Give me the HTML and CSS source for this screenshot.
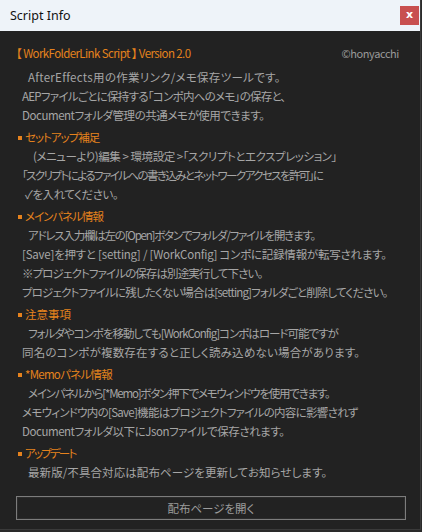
FILE: index.html
```html
<!DOCTYPE html>
<html lang="ja">
<head>
<meta charset="utf-8">
<link rel="stylesheet" href="styles.css">
</head>
<body>
<div class="window">
  <div class="titlebar">
    <span class="title">Script Info</span>
    <span class="close">x</span>
  </div>
  <div class="content">
    <div class="header">
      <span class="ver">【 WorkFolderLink Script 】 Version 2.0</span>
      <span class="copy">©honyacchi</span>
    </div>
    <div class="para">
      <div class="line first sp3">AfterEffects用の作業リンク/メモ保存ツールです。</div>
      <div class="line sm7">AEPファイルごとに保持する「コンポ内へのメモ」の保存と、</div>
      <div class="line">Documentフォルダ管理の共通メモが使用できます。</div>
    </div>

    <div class="heading sm10"><span class="bullet"></span>セットアップ補足</div>
    <div class="para">
      <div class="line first wide">(メニューより)編集 &gt; 環境設定 &gt;「スクリプトとエクスプレッション」</div>
      <div class="line sm16">「スクリプトによるファイルへの書き込みとネットワークアクセスを許可」に</div>
      <div class="line check">✓を入れてください。</div>
    </div>

    <div class="heading sm10"><span class="bullet"></span>メインパネル情報</div>
    <div class="para">
      <div class="line first sm12">アドレス入力欄は左の[Open]ボタンでフォルダ/ファイルを開きます。</div>
      <div class="line sm2">[Save]を押すと [setting] / [WorkConfig] コンポに記録情報が転写されます。</div>
      <div class="line sm9">※プロジェクトファイルの保存は別途実行して下さい。</div>
      <div class="line sm8">プロジェクトファイルに残したくない場合は[setting]フォルダごと削除してください。</div>
    </div>

    <div class="heading sp0"><span class="bullet"></span>注意事項</div>
    <div class="para">
      <div class="line first sm10">フォルダやコンポを移動しても[WorkConfig]コンポはロード可能ですが</div>
      <div class="line sp2">同名のコンポが複数存在すると正しく読み込めない場合があります。</div>
    </div>

    <div class="heading sm7"><span class="bullet"></span>*Memoパネル情報</div>
    <div class="para">
      <div class="line first sm12">メインパネルから[*Memo]ボタン押下でメモウィンドウを使用できます。</div>
      <div class="line sm7">メモウィンドウ内の[Save]機能はプロジェクトファイルの内容に影響されず</div>
      <div class="line">Documentフォルダ以下にJsonファイルで保存されます。</div>
    </div>

    <div class="heading sm18"><span class="bullet"></span>アップデート</div>
    <div class="para">
      <div class="line first sp1">最新版/不具合対応は配布ページを更新してお知らせします。</div>
    </div>

    <div class="btnrow">
      <div class="button">配布ページを開く</div>
    </div>
  </div>
</div>
</body>
</html>
```

FILE: styles.css
```css
html, body {
  margin: 0;
  padding: 0;
  background: #2a2a2a;
}
body {
  width: 422px;
  height: 532px;
  overflow: hidden;
  font-family: "Noto Sans CJK JP", "Noto Sans", sans-serif;
}
.window {
  width: 420px;
  height: 529px;
  display: flex;
  flex-direction: column;
  background: #222222;
  border-right: 1px solid #3a3a3a;
  border-bottom: 1px solid #3a3a3a;
}
.titlebar {
  height: 31px;
  background: #eef3f9;
  display: flex;
  align-items: center;
  justify-content: space-between;
  padding: 0 1px 0 10px;
  flex-shrink: 0;
}
.title {
  font-family: "Noto Sans", sans-serif;
  font-size: 12.5px;
  color: #111;
}
.close {
  width: 19px;
  height: 19px;
  background: #c84f4f;
  color: #fff;
  font-family: "DejaVu Sans", sans-serif;
  font-weight: bold;
  font-size: 11px;
  display: flex;
  align-items: center;
  justify-content: center;
  line-height: 1;
  padding-bottom: 2px;
  box-sizing: border-box;
}
.content {
  flex: 1;
  padding: 13px 20px 0 16px;
  font-size: 11.5px;
  color: #a6a6a6;
  font-feature-settings: "palt";
  letter-spacing: -0.45px;
}
.header {
  display: flex;
  justify-content: space-between;
  line-height: 19px;
  margin-bottom: 5px;
}
.ver {
  color: #e5821d;
  letter-spacing: -0.6px;
}
.copy {
  color: #9a9a9a;
  font-size: 11px;
  letter-spacing: -0.4px;
  padding-right: 1px;
}
.line {
  line-height: 19px;
  height: 19px;
  padding-left: 6px;
  white-space: nowrap;
}
.line.first {
  padding-left: 12px;
}
.line.first.wide {
  padding-left: 17px;
}
.line.check {
  padding-left: 9px;
}
.sp3 { letter-spacing: 0.3px; }
.sp2 { letter-spacing: 0.2px; }
.sp1 { letter-spacing: 0.08px; }
.sp0 { letter-spacing: 0; }
.sm2 { letter-spacing: -0.23px; }
.sm7 { letter-spacing: -0.72px; }
.sm8 { letter-spacing: -0.85px; }
.sm9 { letter-spacing: -0.9px; }
.sm10 { letter-spacing: -1px; }
.sm12 { letter-spacing: -1.22px; }
.sm16 { letter-spacing: -1.6px; }
.sm18 { letter-spacing: -1.8px; }
.heading {
  margin-top: 3px;
  line-height: 19px;
  height: 19px;
  color: #e5821d;
  display: flex;
  align-items: center;
  padding-left: 2px;
}
.bullet {
  width: 4px;
  height: 4px;
  background: #e5821d;
  margin-right: 3px;
  margin-top: 1px;
}
.btnrow {
  margin-top: 14px;
}
.button {
  width: 390px;
  height: 24px;
  box-sizing: border-box;
  border: 1px solid #7c7c7c;
  box-shadow: inset 0 0 0 1px #2c2c2c;
  display: flex;
  align-items: center;
  justify-content: center;
  color: #9c9c9c;
  letter-spacing: 0;
}
```
